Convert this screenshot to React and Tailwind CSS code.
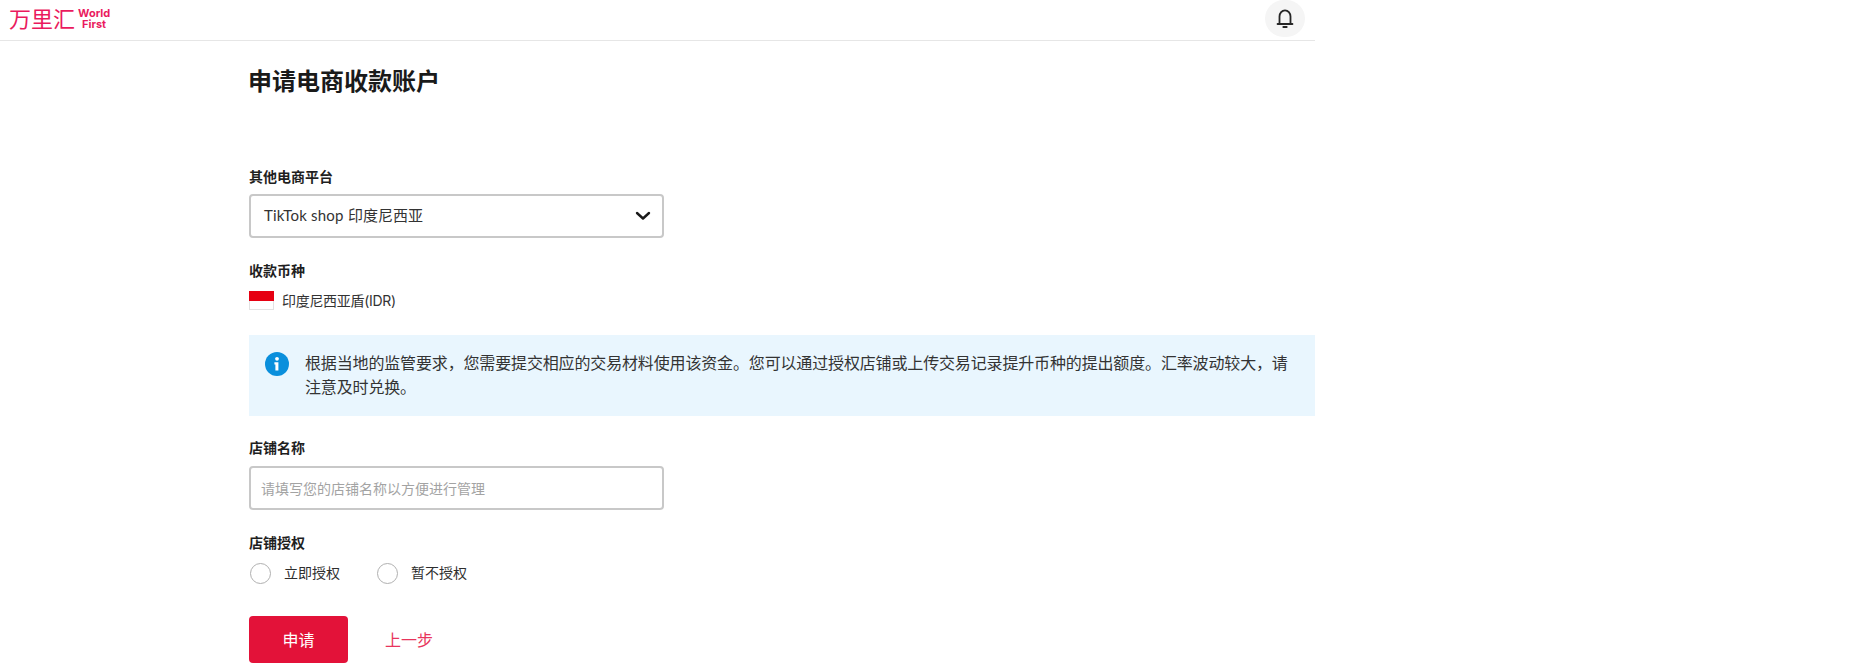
const font = 'font-["Inter","Noto_Sans_CJK_SC",sans-serif]';

function Label({ children, className = "" }) {
  return <div className={`text-[14px] leading-[20px] font-bold text-[#1f1f1f] ${className}`}>{children}</div>;
}

function Radio({ children }) {
  return (
    <label className="flex items-center h-[21px]">
      <span className="w-[21px] h-[21px] rounded-full border border-[#b0b0b0] bg-white" />
      <span className="ml-[13px] text-[14px] leading-[20px] -mt-[1px] text-[#2e2e2e]">{children}</span>
    </label>
  );
}

export default function App() {
  return (
    <div className={`w-[1315px] bg-white ${font}`}>
      <header className="h-[41px] border-b border-[#e6e6e6] flex justify-between items-start">
        <div className="flex items-center h-[38px] pl-[9px] text-[#ea1a5e]">
          <span className="text-[22px] leading-[24px] font-normal">万里汇</span>
          <span className="ml-[3px] flex flex-col items-center text-[11px] leading-[11px] font-bold">
            <span>World</span>
            <span>First</span>
          </span>
        </div>
        <div className="mr-[10px] w-[40px] h-[37px] rounded-full bg-[#f5f5f5] flex items-center justify-center">
          <svg width="20" height="20" viewBox="0 0 20 20" fill="none" stroke="#262626" strokeWidth="1.8" strokeLinecap="round">
            <path d="M4.5 15V7.5a5.5 6.2 0 0 1 11 0V15" />
            <path d="M2.6 15h14.8" strokeWidth="2" />
            <path d="M8.4 18h3.2" strokeWidth="2" />
          </svg>
        </div>
      </header>
      <main className="pl-[249px]">
        <h1 className="mt-[25px] -ml-[1px] text-[24px] leading-[32px] font-bold text-[#1a1a1a]">申请电商收款账户</h1>
        <Label className="mt-[69px]">其他电商平台</Label>
        <div className="mt-[7px] w-[415px] h-[44px] rounded-[4px] border-2 border-[#c8c8c8] flex items-center justify-between pl-[13px] pr-[11px] text-[15px] text-[#333333]">
          <span>
            <span className='font-["Lato",sans-serif] text-[15px] tracking-[0.2px]'>TikTok shop</span> 印度尼西亚
          </span>
          <svg width="16" height="10" viewBox="0 0 16 10" fill="none" stroke="#1a1a1a" strokeWidth="2.4" strokeLinecap="round" strokeLinejoin="round">
            <path d="M2 2l6 5.5L14 2" />
          </svg>
        </div>
        <Label className="mt-[23px]">收款币种</Label>
        <div className="mt-[10px] h-[19px] flex items-center">
          <div className="w-[25px] h-[19px] flex flex-col">
            <div className="h-[10px] bg-[#e60012]" />
            <div className="flex-1 bg-white border border-t-0 border-[#e2e2e2]" />
          </div>
          <span className="ml-[8px] -mt-[1px] text-[14px] leading-[19px] tracking-[-0.3px] text-[#333333]">印度尼西亚盾(IDR)</span>
        </div>
        <div className="mt-[25px] h-[81px] bg-[#e9f6fe] flex items-start pl-[16px] pr-[24px] pt-[16px]">
          <svg className="mt-[1px] shrink-0" width="24" height="24" viewBox="0 0 24 24">
            <circle cx="12" cy="12" r="12" fill="#0a8fdc" />
            <circle cx="12" cy="6.8" r="1.9" fill="#fff" />
            <path d="M9.4 10.2h4v8.2h-3v-5.8h-1z" fill="#fff" />
          </svg>
          <p className="ml-[16px] text-[16px] leading-[24px] tracking-[-0.15px] text-[#333333]">
            根据当地的监管要求，您需要提交相应的交易材料使用该资金。您可以通过授权店铺或上传交易记录提升币种的提出额度。汇率波动较大，请注意及时兑换。
          </p>
        </div>
        <Label className="mt-[22px]">店铺名称</Label>
        <div className="mt-[8px] w-[415px] h-[44px] rounded-[4px] border-2 border-[#c8c8c8] flex items-center pl-[10px] text-[14px] text-[#a3a3a3]">
          请填写您的店铺名称以方便进行管理
        </div>
        <Label className="mt-[23px]">店铺授权</Label>
        <div className="mt-[10px] flex gap-[37px] pl-[1px]">
          <Radio>立即授权</Radio>
          <Radio>暂不授权</Radio>
        </div>
        <div className="mt-[32px] flex items-center">
          <button className="w-[99px] h-[47px] rounded-[4px] bg-[#e31239] text-white text-[16px]">申请</button>
          <a className="ml-[37px] text-[16px] text-[#e8355c]">上一步</a>
        </div>
      </main>
    </div>
  );
}
